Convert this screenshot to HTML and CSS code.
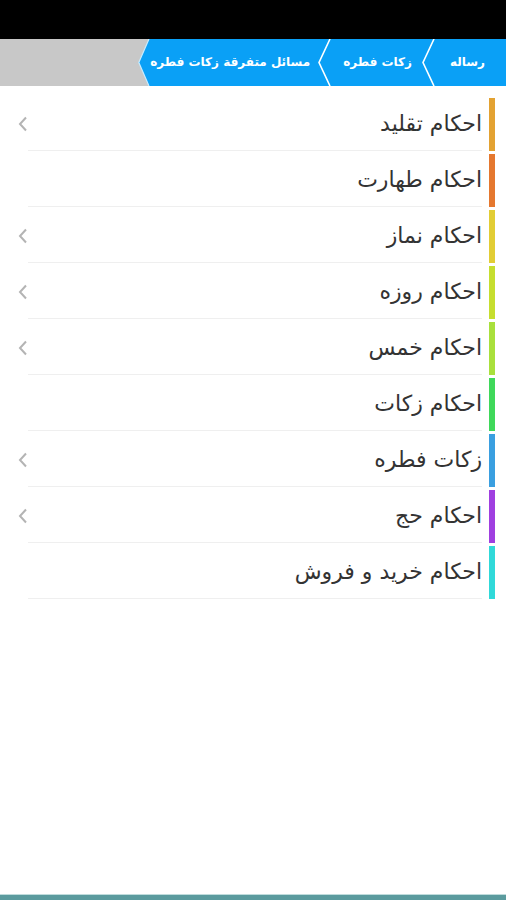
FILE: index.html
```html
<!DOCTYPE html>
<html lang="fa">
<head>
<meta charset="utf-8">
<link rel="stylesheet" href="styles.css">
</head>
<body>
<div class="statusbar"></div>
<nav class="crumbs">
  <div class="crumb-track">
    <span class="crumb crumb-first">رساله</span>
    <svg class="sep" width="13" height="47" viewBox="0 0 13 47"><polyline points="12,0 1,23.5 12,47" fill="none" stroke="#ffffff" stroke-width="1.6"/></svg>
    <span class="crumb crumb-mid">زکات فطره</span>
    <svg class="sep" width="13" height="47" viewBox="0 0 13 47"><polyline points="12,0 1,23.5 12,47" fill="none" stroke="#ffffff" stroke-width="1.6"/></svg>
    <span class="crumb crumb-last">مسائل متفرقة زکات فطره</span>
    <svg class="crumb-end" width="12" height="47" viewBox="0 0 12 47"><polygon points="12,0 11,0 0.8,23.5 11,47 12,47" fill="#0aa0f6"/><polyline points="11,0 0.8,23.5 11,47" fill="none" stroke="#c8ecff" stroke-width="1.2"/></svg>
  </div>
</nav>
<main class="list">
  <div class="item">
    <span class="bar c1"></span>
    <div class="label">احکام تقلید</div>
    <span class="arrow"><svg width="10" height="16" viewBox="0 0 10 16"><polyline points="8,1.5 2,8 8,14.5" fill="none" stroke="#b4b4b4" stroke-width="2"/></svg></span>
  </div>
  <div class="item">
    <span class="bar c2"></span>
    <div class="label">احکام طهارت</div>
    <span class="arrow"></span>
  </div>
  <div class="item">
    <span class="bar c3"></span>
    <div class="label">احکام نماز</div>
    <span class="arrow"><svg width="10" height="16" viewBox="0 0 10 16"><polyline points="8,1.5 2,8 8,14.5" fill="none" stroke="#b4b4b4" stroke-width="2"/></svg></span>
  </div>
  <div class="item">
    <span class="bar c4"></span>
    <div class="label">احکام روزه</div>
    <span class="arrow"><svg width="10" height="16" viewBox="0 0 10 16"><polyline points="8,1.5 2,8 8,14.5" fill="none" stroke="#b4b4b4" stroke-width="2"/></svg></span>
  </div>
  <div class="item">
    <span class="bar c5"></span>
    <div class="label">احکام خمس</div>
    <span class="arrow"><svg width="10" height="16" viewBox="0 0 10 16"><polyline points="8,1.5 2,8 8,14.5" fill="none" stroke="#b4b4b4" stroke-width="2"/></svg></span>
  </div>
  <div class="item">
    <span class="bar c6"></span>
    <div class="label">احکام زکات</div>
    <span class="arrow"></span>
  </div>
  <div class="item">
    <span class="bar c7"></span>
    <div class="label">زکات فطره</div>
    <span class="arrow"><svg width="10" height="16" viewBox="0 0 10 16"><polyline points="8,1.5 2,8 8,14.5" fill="none" stroke="#b4b4b4" stroke-width="2"/></svg></span>
  </div>
  <div class="item">
    <span class="bar c8"></span>
    <div class="label">احکام حج</div>
    <span class="arrow"><svg width="10" height="16" viewBox="0 0 10 16"><polyline points="8,1.5 2,8 8,14.5" fill="none" stroke="#b4b4b4" stroke-width="2"/></svg></span>
  </div>
  <div class="item">
    <span class="bar c9"></span>
    <div class="label">احکام خرید و فروش</div>
    <span class="arrow"></span>
  </div>
</main>
<footer class="bottombar"></footer>
</body>
</html>
```
FILE: styles.css
```css
html, body {
  margin: 0;
  padding: 0;
  height: 100%;
}
body {
  display: flex;
  flex-direction: column;
  background: #ffffff;
  font-family: "DejaVu Sans", "Noto Sans", sans-serif;
}
.statusbar {
  height: 39px;
  background: #000000;
  flex: none;
}
.crumbs {
  height: 47px;
  flex: none;
  background: #c8c8c8;
  display: flex;
  direction: rtl;
}
.crumb-track {
  display: flex;
  align-items: center;
  height: 47px;
  background: #0aa0f6;
  padding-right: 21px;
}
.crumb {
  color: #ffffff;
  font-size: 12px;
  font-weight: bold;
  white-space: nowrap;
  line-height: 47px;
}
.crumb-first {
  padding-left: 15px;
}
.crumb-mid {
  padding-right: 10px;
  padding-left: 12px;
}
.crumb-last {
  padding-right: 8px;
}
.sep {
  display: block;
  flex: none;
}
.crumb-end {
  display: block;
  flex: none;
  background: #c8c8c8;
}
.list {
  flex: 1;
  padding-top: 11px;
  direction: rtl;
}
.item {
  display: flex;
  height: 56px;
  padding-top: 1px;
  box-sizing: border-box;
  align-items: flex-start;
}
.bar {
  width: 6px;
  height: 53px;
  margin-right: 11px;
  margin-left: 7px;
  flex: none;
}
.label {
  flex: 1;
  height: 52px;
  line-height: 52px;
  border-bottom: 1px solid #efefef;
  font-size: 22px;
  color: #333333;
  white-space: nowrap;
}
.arrow {
  width: 28px;
  height: 52px;
  flex: none;
  display: flex;
  align-items: center;
  justify-content: flex-start;
  padding-left: 18px;
  box-sizing: border-box;
  direction: ltr;
}
.arrow svg {
  display: block;
}
.c1 { background: #e3a232; }
.c2 { background: #e5782f; }
.c3 { background: #e2cd35; }
.c4 { background: #c6de2f; }
.c5 { background: #a9e03c; }
.c6 { background: #3fd85a; }
.c7 { background: #3a9fe0; }
.c8 { background: #a03fe0; }
.c9 { background: #30d9d9; }
.bottombar {
  height: 5px;
  flex: none;
  background: #5b9b9e;
  border-top: 1px solid #bfdcdc;
}
```
